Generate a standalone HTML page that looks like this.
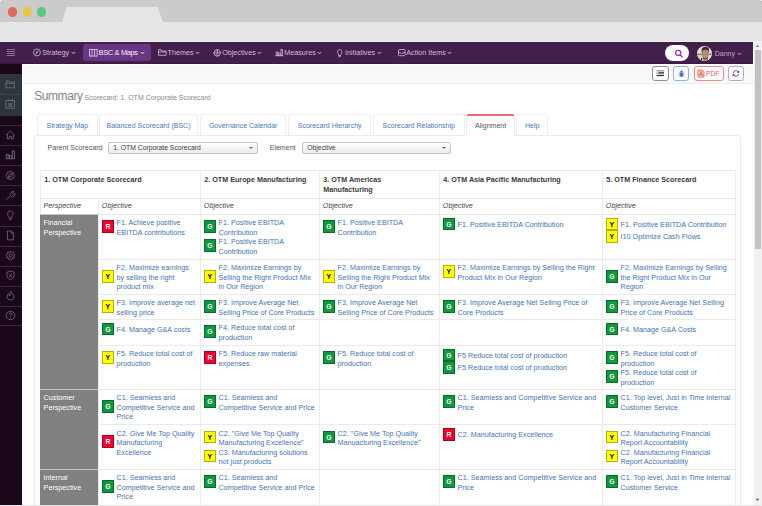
<!DOCTYPE html>
<html><head><meta charset="utf-8">
<style>
*{box-sizing:border-box;margin:0;padding:0}
html,body{width:762px;height:506px;overflow:hidden;background:#e9e9e9;font-family:"Liberation Sans",sans-serif}
.abs{position:absolute}
#topbar{left:0;top:0;width:762px;height:22px;background:#cbcbcb}
.dot{position:absolute;width:9.4px;height:9.4px;border-radius:50%;top:7.3px}
#addr{left:0;top:22px;width:762px;height:19px;background:#e5e5e5}
#nav{left:0;top:42px;width:754px;height:22px;background:#42204b;border-bottom:1px solid #3a1a42}
.ni{position:absolute;top:0;height:21px;line-height:21.6px;color:#cdbfdc;font-size:7.2px;white-space:nowrap}
.chev{display:inline-block;width:3px;height:3px;border-right:0.75px solid #cdbfdc;border-bottom:0.75px solid #cdbfdc;transform:scaleY(0.62) rotate(45deg);position:relative;top:-0.9px;margin-left:2.6px}
#scroll{left:753px;top:42px;width:9px;height:463px;background:#f1f1f1;border-left:1px solid #f9f9f9}
#thumb{left:755px;top:50px;width:6px;height:199px;background:#c1c1c1}
#side{left:0;top:64px;width:22px;height:441px;background:#1a0719}
.sep{position:absolute;left:0;width:22px;height:1px;background:#3a2a3c}
#toolbar{left:22px;top:64px;width:731px;height:20px;background:#f9f9fa;border-top:1px solid #fff;border-left:1px solid #fff;border-bottom:1px solid #eceef2}
#main{left:22px;top:84px;width:731.5px;height:421px;background:#fff}
.btn{position:absolute;top:66px;height:15px;border:1px solid #888;border-radius:3px;background:#fff}
#bottom{left:0;top:504.5px;width:762px;height:2px;background:#e6e6e6}

.tab{top:114.3px;height:20.7px;border:1px solid #eeeeee;border-bottom:none;border-radius:3px 3px 0 0;background:#fff;color:#4a79b3;font-size:7px;line-height:21px;text-align:center;white-space:nowrap}
.tab.act{border-top:2px solid #ef6a6f;color:#555;height:21.5px;line-height:20.5px}
.lbl{font-size:7.05px;color:#555;line-height:12px;white-space:nowrap}
.sel{top:141.5px;height:12px;border:1px solid #c2c2c2;border-radius:2px;background:linear-gradient(#fff,#ececec);font-size:6.8px;color:#3c3c3c;line-height:10.5px;padding-left:4px;white-space:nowrap}
.arr{position:absolute;right:4.2px;top:4.2px;width:0;height:0;border-left:2.2px solid transparent;border-right:2.2px solid transparent;border-top:2.4px solid #6a6a6a}
/*TBLCSS*/
.hl{height:1px;background:#ebebeb}
.vl{width:1px;background:#ebebeb}
.gc{background:#808080;border-top:1px solid #c4c4c4}
.pt{position:absolute;left:3.6px;top:3.2px;color:#fff;font-size:7.2px;line-height:9.45px;white-space:nowrap}
.hd{font-size:7.2px;font-weight:700;color:#3a3a3a;line-height:10px;white-space:nowrap}
.sh{font-size:7.2px;font-style:italic;color:#444;line-height:10px;white-space:nowrap}
.it{display:flex;align-items:center;white-space:nowrap}
.b{display:inline-block;flex:none;width:12.6px;height:12.6px;border:0.5px solid rgba(0,0,0,0.3);font-size:6.8px;font-weight:700;text-align:center;line-height:11.4px;position:relative;margin-right:2.400000000000002px}
.b.g{background:#0c9a3c;color:#fff}
.b.r{background:#f2002e;color:#fff}
.b.y{background:#ffff00;color:#000}
.tx{font-size:7.2px;line-height:9.45px;color:#4674b0;position:relative;top:0.5px}
/*END*/
</style></head><body>
<div id="topbar" class="abs"></div>
<div class="dot" style="left:7.6px;background:#e0685d"></div>
<div class="dot" style="left:22.5px;background:#e8c447"></div>
<div class="dot" style="left:37px;background:#58cb80"></div>
<svg class="abs" style="left:0;top:0" width="762" height="42"><path d="M62 22 L66.6 7 L157.6 7 L163 22 Z" fill="#e5e5e5"/></svg>
<div id="addr" class="abs"></div>
<div class="abs" style="left:0;top:40.8px;width:762px;height:1.2px;background:#f3f3f3"></div><div class="abs" style="left:0;top:0;width:1px;height:1px;background:#fff"></div><div class="abs" style="left:761px;top:0;width:1px;height:1px;background:#fff"></div>
<div id="nav" class="abs"></div>

<!-- nav items -->
<svg class="abs" style="left:7px;top:49px" width="9" height="8"><g stroke="#8d7c98" stroke-width="0.9"><line x1="0" y1="0.5" x2="8" y2="0.5"/><line x1="0" y1="2.5" x2="8" y2="2.5"/><line x1="0" y1="4.5" x2="8" y2="4.5"/><line x1="0" y1="6.5" x2="8" y2="6.5"/></g></svg>
<svg class="abs" style="left:32px;top:48px" width="10" height="9"><circle cx="4.9" cy="4.4" r="3.5" fill="none" stroke="#cdbfdc" stroke-width="0.8"/><path d="M6.9 2.4 L5.3 5 L2.9 6.4 L4.5 3.8 Z" fill="#cdbfdc"/></svg>
<div class="ni" style="left:42.3px;top:42px">Strategy<span class="chev"></span></div>
<div class="abs" style="left:83px;top:44.2px;width:68px;height:17.3px;background:#6a3583;border-radius:3px"></div>
<svg class="abs" style="left:88.5px;top:48.8px" width="9" height="8"><g fill="none" stroke="#e0d6ea" stroke-width="0.8"><rect x="0.5" y="0.5" width="7.6" height="6.6"/><line x1="3" y1="0.5" x2="3" y2="7.1"/><line x1="5.6" y1="0.5" x2="5.6" y2="7.1"/></g></svg>
<div class="ni" style="left:98.6px;top:42px;color:#f3eef7;font-size:7.5px;letter-spacing:-0.38px">BSC &amp; Maps<span class="chev" style="border-color:#f3eef7;margin-left:3px"></span></div>
<svg class="abs" style="left:157.8px;top:49px" width="9" height="7"><g fill="none" stroke="#cdbfdc" stroke-width="0.8"><path d="M0.5 1.5 L0.5 6.3 L8.1 6.3 L8.1 2 L3.5 2 L3 0.6 L0.5 0.6 Z"/><line x1="0.5" y1="3" x2="8.1" y2="3"/></g></svg>
<div class="ni" style="left:167.6px;top:42px">Themes<span class="chev"></span></div>
<svg class="abs" style="left:212.8px;top:48.6px" width="9" height="8"><g fill="none" stroke="#cdbfdc" stroke-width="0.8"><circle cx="4.2" cy="3.9" r="3.2"/><line x1="4.2" y1="0" x2="4.2" y2="7.8"/><line x1="0.3" y1="3.9" x2="8.1" y2="3.9"/></g></svg>
<div class="ni" style="left:222.2px;top:42px">Objectives<span class="chev"></span></div>
<svg class="abs" style="left:275px;top:49px" width="9" height="8"><g fill="none" stroke="#cdbfdc" stroke-width="0.75"><rect x="1.2" y="3" width="1.6" height="3.4"/><rect x="3.6" y="4" width="1.6" height="2.4"/><rect x="6" y="0.6" width="1.6" height="5.8"/></g><rect x="0.4" y="6.4" width="7.8" height="0.8" fill="#cdbfdc"/></svg>
<div class="ni" style="left:284.2px;top:42px">Measures<span class="chev"></span></div>
<svg class="abs" style="left:337.3px;top:48.5px" width="6" height="9"><g fill="none" stroke="#cdbfdc" stroke-width="0.8"><path d="M1.5 5.2 C0 4 0.2 0.5 2.7 0.5 C5.2 0.5 5.4 4 3.9 5.2 L3.9 6.5 L1.5 6.5 Z"/><line x1="1.6" y1="7.6" x2="3.8" y2="7.6"/></g></svg>
<div class="ni" style="left:345.1px;top:42px">Initiatives<span class="chev"></span></div>
<svg class="abs" style="left:397.5px;top:48.8px" width="8" height="8"><g fill="none" stroke="#cdbfdc" stroke-width="0.8"><rect x="0.5" y="0.5" width="6.6" height="6.2" rx="0.8"/><path d="M0.5 3.6 L2.5 3.6 L3.8 5 L5.1 3.6 L7.1 3.6"/></g></svg>
<div class="ni" style="left:406.3px;top:42px">Action Items<span class="chev"></span></div>
<div class="abs" style="left:665px;top:44.5px;width:23.5px;height:16.8px;background:#fff;border-radius:8.5px"></div>
<svg class="abs" style="left:674px;top:49px" width="10" height="9"><g fill="none" stroke="#8a3cb8" stroke-width="1.3"><circle cx="4.2" cy="3.9" r="2.6"/><line x1="6.1" y1="5.8" x2="8.4" y2="7.9" stroke-linecap="round"/></g></svg>
<svg class="abs" style="left:696px;top:45px" width="17" height="17"><defs><clipPath id="av"><circle cx="8.5" cy="8.5" r="7.5"/></clipPath></defs>
<g clip-path="url(#av)">
<rect x="0" y="0" width="17" height="17" fill="#e4e0da"/>
<rect x="0" y="8.6" width="17" height="1.6" fill="#a8705c"/>
<path d="M0 10 L7 11 L7 17 L0 17 Z" fill="#b8e2c4"/>
<path d="M12 10.5 L17 10 L17 17 L12 17 Z" fill="#c8e8d0"/>
<ellipse cx="9.4" cy="9" rx="3.3" ry="4.6" fill="#b88a78"/>
<path d="M5.6 6.5 C5.4 2.6 7.4 1.8 9.6 1.8 C12 1.8 13.4 3.2 13.2 6.4 L12.6 8.6 L12.3 5.4 C11 4.4 8 4.4 6.6 5.4 L6.3 8.4 Z" fill="#3b2a20"/>
<path d="M6.8 11.6 C7.6 13.8 11.2 13.8 12 11.6 L12 13.2 C11.2 15 7.6 15 6.8 13.2 Z" fill="#4a362c"/>
<rect x="7.4" y="13.6" width="4.6" height="4" fill="#9a7a6c"/>
<rect x="5" y="13.2" width="1.1" height="3" fill="#111"/>
</g></svg>
<div class="ni" style="left:714.7px;top:42.5px;color:#b9a9d2;font-size:7.05px">Danny<span class="chev" style="border-color:#b9a9d2;margin-left:3px"></span></div>
<div id="scroll" class="abs"></div>
<div id="thumb" class="abs"></div>
<svg class="abs" style="left:755px;top:44px" width="5" height="4"><path d="M0.8 3 L2.5 0.8 L4.2 3 Z" fill="#7a7a7a"/></svg>
<svg class="abs" style="left:755px;top:498px" width="5" height="4"><path d="M0.8 0.8 L2.5 3 L4.2 0.8 Z" fill="#505050"/></svg>
<div id="side" class="abs"></div>
<div id="toolbar" class="abs"></div>
<div id="main" class="abs"></div>

<!-- sidebar -->
<div class="abs" style="left:0;top:74px;width:22px;height:41.5px;background:#2f353b"></div>
<div class="sep" style="top:94px;background:#3f464d"></div>
<div class="sep" style="top:125px"></div>
<div class="sep" style="top:145px"></div>
<div class="sep" style="top:165px"></div>
<div class="sep" style="top:185px"></div>
<div class="sep" style="top:205px"></div>
<div class="sep" style="top:226px"></div>
<div class="sep" style="top:246px"></div>
<div class="sep" style="top:266px"></div>
<div class="sep" style="top:286px"></div>
<div class="sep" style="top:306px"></div>
<div class="sep" style="top:325px"></div>
<svg class="abs" style="left:5px;top:80px" width="11" height="9"><g fill="none" stroke="#6d7680" stroke-width="0.8"><path d="M1 1 L4 1 L4.8 2.2 L9.5 2.2 L9.5 7.8 L1 7.8 Z"/><line x1="1" y1="3.4" x2="9.5" y2="3.4"/></g></svg>
<svg class="abs" style="left:5px;top:99px" width="11" height="10"><g fill="none" stroke="#6d7680" stroke-width="0.8"><rect x="1" y="1.6" width="8.5" height="7.6"/><line x1="3.2" y1="0" x2="3.2" y2="2.4"/><line x1="7.3" y1="0" x2="7.3" y2="2.4"/><line x1="3.8" y1="4" x2="3.8" y2="8"/><line x1="5.3" y1="4" x2="5.3" y2="8"/><line x1="6.8" y1="4" x2="6.8" y2="8"/></g></svg>
<svg class="abs" style="left:5px;top:130px" width="11" height="10"><g fill="none" stroke="#6e5f82" stroke-width="0.9"><path d="M1.2 5 L5.3 1 L9.4 5"/><path d="M2.3 4 L2.3 8.8 L4.3 8.8 L4.3 6.3 L6.3 6.3 L6.3 8.8 L8.3 8.8 L8.3 4"/></g></svg>
<svg class="abs" style="left:5px;top:150px" width="11" height="10"><g fill="none" stroke="#6e5f82" stroke-width="0.9"><rect x="1.2" y="4.5" width="2" height="4.3"/><rect x="4.3" y="5.5" width="2" height="3.3"/><rect x="7.4" y="1" width="2" height="7.8"/></g></svg>
<svg class="abs" style="left:5px;top:170px" width="11" height="11"><g fill="none" stroke="#6e5f82" stroke-width="0.9"><circle cx="5.3" cy="5.5" r="4"/><path d="M7.4 3.4 L4.3 4.5 L3.2 7.6 L6.3 6.5 Z"/></g></svg>
<svg class="abs" style="left:5px;top:190px" width="11" height="11"><g fill="none" stroke="#6e5f82" stroke-width="0.9"><path d="M1.5 9.5 L5.5 5.5 M5.5 5.5 C4.5 3 6.5 1 9 1.8 L7.5 3.3 L8 4.3 L9 4.8 L10 3.5 C10.5 6 8.5 7.5 6 6.5"/></g></svg>
<svg class="abs" style="left:5px;top:210px" width="11" height="11"><g fill="none" stroke="#6e5f82" stroke-width="0.9"><path d="M4 7 C2 5.5 2 1 5.3 1 C8.6 1 8.6 5.5 6.6 7 L6.6 8.2 L4 8.2 Z"/><line x1="4.2" y1="9.6" x2="6.4" y2="9.6"/></g></svg>
<svg class="abs" style="left:5px;top:230px" width="11" height="11"><g fill="none" stroke="#6e5f82" stroke-width="0.9"><path d="M2.5 1 L6.3 1 L8.5 3.2 L8.5 9.8 L2.5 9.8 Z M6.3 1 L6.3 3.2 L8.5 3.2"/></g></svg>
<svg class="abs" style="left:5px;top:250px" width="11" height="11"><g fill="none" stroke="#6e5f82" stroke-width="0.9"><circle cx="5.5" cy="5.5" r="1.6"/><path d="M5.5 1 L6.5 2.3 L8.2 2 L8.3 3.6 L9.8 4.6 L8.9 6 L9.4 7.6 L7.8 8 L7 9.6 L5.5 8.8 L4 9.6 L3.2 8 L1.6 7.6 L2.1 6 L1.2 4.6 L2.7 3.6 L2.8 2 L4.5 2.3 Z"/></g></svg>
<svg class="abs" style="left:5px;top:270px" width="11" height="11"><g fill="none" stroke="#6e5f82" stroke-width="0.9"><path d="M5.5 1 L9.2 2.3 L9 6 C8.5 8.2 6.8 9.3 5.5 9.8 C4.2 9.3 2.5 8.2 2 6 L1.8 2.3 Z"/><path d="M4 4.2 L7 7.2 M7 4.2 L4 7.2"/></g></svg>
<svg class="abs" style="left:5px;top:290px" width="11" height="11"><g fill="none" stroke="#6e5f82" stroke-width="0.9"><path d="M5.5 1 C6.5 3 9 4.5 9 7 C9 8.8 7.5 9.8 5.5 9.8 C3.5 9.8 2 8.8 2 7 C2 5.5 3 4.5 3.5 3.8 C3.8 5 4.3 5.5 5 5.8 C5 4 5 2.5 5.5 1 Z"/></g></svg>
<svg class="abs" style="left:5px;top:310px" width="11" height="11"><g fill="none" stroke="#6e5f82" stroke-width="0.9"><circle cx="5.5" cy="5.5" r="4.3"/><path d="M4 4.2 C4 2.5 7 2.5 7 4.2 C7 5.3 5.5 5.3 5.5 6.5"/><line x1="5.5" y1="7.6" x2="5.5" y2="8.4"/></g></svg>
<!-- toolbar buttons -->
<div class="btn" style="left:652.2px;width:16.8px;border-color:#8f8f8f"></div>
<svg class="abs" style="left:656px;top:69px" width="9" height="8"><rect x="0.6" y="1" width="7.4" height="1.6" fill="#a9a9a9"/><rect x="2.4" y="3.4" width="5.6" height="1.5" fill="#6d6d6d"/><path d="M0.6 3.2 L1.9 4.1 L0.6 5 Z" fill="#2a3a5a"/><rect x="0.6" y="5.8" width="7.4" height="1.3" fill="#253450"/><rect x="2.4" y="3.4" width="5.6" height="0.6" fill="#253450"/></svg>
<div class="btn" style="left:673.2px;width:15.8px;border-color:#8db4dc"></div>
<svg class="abs" style="left:677px;top:69px" width="9" height="9"><g stroke="#6a98c8" stroke-width="0.5"><line x1="1.2" y1="2.8" x2="3" y2="4"/><line x1="7.8" y1="2.8" x2="6" y2="4"/><line x1="0.9" y1="5.3" x2="2.8" y2="5.3"/><line x1="8.1" y1="5.3" x2="6.2" y2="5.3"/><line x1="1.3" y1="7.8" x2="3" y2="6.8"/><line x1="7.7" y1="7.8" x2="6" y2="6.8"/></g><g fill="#3f78bc"><ellipse cx="4.5" cy="5.4" rx="1.9" ry="2.5"/><ellipse cx="4.5" cy="2.4" rx="1.2" ry="0.9"/></g></svg>
<div class="btn" style="left:694px;width:29.8px;border-color:#f08a8a"></div>
<svg class="abs" style="left:697px;top:69px" width="8" height="9"><path d="M1 1 L5 1 L7 3 L7 8 L1 8 Z" fill="#f6c9b8" stroke="#e86a5a" stroke-width="0.9"/><path d="M2.6 6.8 C3.3 5.3 3.9 4 4 2.6 C4.3 4 4.8 5.3 5.6 6.8" fill="none" stroke="#d84848" stroke-width="0.6"/><rect x="2.4" y="5.2" width="3.4" height="0.6" fill="#d84848"/></svg>
<div class="abs" style="left:706px;top:69px;font-size:6.5px;line-height:9px;color:#e2546a;letter-spacing:0.05px">PDF</div>
<div class="btn" style="left:728.2px;width:15.6px;border-color:#b9a6d6"></div>
<svg class="abs" style="left:732px;top:70px" width="8" height="7"><g fill="none" stroke="#6b4c9c" stroke-width="1"><path d="M1.3 3 A2.6 2.6 0 0 1 6 1.8"/><path d="M6.5 4 A2.6 2.6 0 0 1 1.8 5.2"/></g><g fill="#6b4c9c"><path d="M7.2 0.2 L7.2 3.1 L4.6 2.4 Z"/><path d="M0.6 6.8 L0.6 3.9 L3.2 4.6 Z"/></g></svg>
<!-- content -->
<div class="abs" style="left:34.2px;top:88.8px;font-size:12px;letter-spacing:-0.42px;color:#858585;line-height:14px;white-space:nowrap">Summary</div>
<div class="abs" style="left:84.6px;top:93px;font-size:7px;color:#8a8a8a;line-height:9px;white-space:nowrap">Scorecard: 1. OTM Corporate Scorecard</div>
<div class="abs" style="left:34px;top:135px;width:707px;height:375px;border:1px solid #ececec;border-radius:3px 3px 0 0"></div>
<div class="abs tab" style="left:37px;width:60.6px">Strategy Map</div>
<div class="abs tab" style="left:98.6px;width:99.8px">Balanced Scorecard (BSC)</div>
<div class="abs tab" style="left:200px;width:86.3px">Governance Calendar</div>
<div class="abs tab" style="left:288.4px;width:82.6px">Scorecard Hierarchy</div>
<div class="abs tab" style="left:372.6px;width:92.4px">Scorecard Relationship</div>
<div class="abs tab act" style="left:466.3px;width:48.6px">Alignment</div>
<div class="abs tab" style="left:516.2px;width:32px">Help</div>
<div class="abs lbl" style="left:47.6px;top:141.5px">Parent Scorecard</div>
<div class="abs sel" style="left:108.2px;width:149.6px">1. OTM Corporate Scorecard<span class="arr"></span></div>
<div class="abs lbl" style="left:269.7px;top:141.5px">Element</div>
<div class="abs sel" style="left:302.3px;width:149px">Objective<span class="arr"></span></div>
<!--TBL--><div class="abs hl" style="left:40px;top:170px;width:696px"></div>
<div class="abs hl" style="left:40px;top:198px;width:696px"></div>
<div class="abs hl" style="left:40px;top:214px;width:696px"></div>
<div class="abs hl" style="left:40px;top:214px;width:696px"></div>
<div class="abs hl" style="left:40px;top:259px;width:696px"></div>
<div class="abs hl" style="left:40px;top:294px;width:696px"></div>
<div class="abs hl" style="left:40px;top:319px;width:696px"></div>
<div class="abs hl" style="left:40px;top:345px;width:696px"></div>
<div class="abs hl" style="left:40px;top:389px;width:696px"></div>
<div class="abs hl" style="left:40px;top:424.3px;width:696px"></div>
<div class="abs hl" style="left:40px;top:469px;width:696px"></div>
<div class="abs hl" style="left:40px;top:504.5px;width:696px"></div>
<div class="abs vl" style="left:40px;top:170px;height:334.5px"></div>
<div class="abs vl" style="left:98px;top:198px;height:306.5px"></div>
<div class="abs vl" style="left:200px;top:170px;height:334.5px"></div>
<div class="abs vl" style="left:319px;top:170px;height:334.5px"></div>
<div class="abs vl" style="left:439px;top:170px;height:334.5px"></div>
<div class="abs vl" style="left:602px;top:170px;height:334.5px"></div>
<div class="abs vl" style="left:735px;top:170px;height:334.5px"></div>
<div class="abs gc" style="left:40px;top:214px;width:58px;height:175px"><div class="pt">Financial<br>Perspective</div></div>
<div class="abs gc" style="left:40px;top:389px;width:58px;height:80px"><div class="pt">Customer<br>Perspective</div></div>
<div class="abs gc" style="left:40px;top:469px;width:58px;height:35.5px"><div class="pt">Internal<br>Perspective</div></div>
<div class="abs hd" style="left:44.2px;top:175px">1. OTM Corporate Scorecard</div>
<div class="abs hd" style="left:204.2px;top:175px">2. OTM Europe Manufacturing</div>
<div class="abs hd" style="left:323.2px;top:175px">3. OTM Americas<br>Manufacturing</div>
<div class="abs hd" style="left:443.2px;top:175px">4. OTM Asia Pacific Manufacturing</div>
<div class="abs hd" style="left:606.2px;top:175px">5. OTM Finance Scorecard</div>
<div class="abs sh" style="left:43.5px;top:201.4px">Perspective</div>
<div class="abs sh" style="left:101.8px;top:201.4px">Objective</div>
<div class="abs sh" style="left:203.8px;top:201.4px">Objective</div>
<div class="abs sh" style="left:322.8px;top:201.4px">Objective</div>
<div class="abs sh" style="left:442.8px;top:201.4px">Objective</div>
<div class="abs sh" style="left:605.8px;top:201.4px">Objective</div>
<div class="abs it" style="left:101.6px;top:217.80px;height:18.90px"><span class="b r" style="top:-0.6px">R</span><span class="tx">F1. Achieve positive<br>EBITDA contributions</span></div>
<div class="abs it" style="left:203.6px;top:217.80px;height:18.90px"><span class="b g" style="top:-0.6px">G</span><span class="tx">F1. Positive EBITDA<br>Contribution</span></div>
<div class="abs it" style="left:203.6px;top:236.70px;height:18.90px"><span class="b g" style="top:-0.6px">G</span><span class="tx">F1. Positive EBITDA<br>Contribution</span></div>
<div class="abs it" style="left:322.6px;top:217.80px;height:18.90px"><span class="b g" style="top:-0.6px">G</span><span class="tx">F1. Positive EBITDA<br>Contribution</span></div>
<div class="abs it" style="left:442.6px;top:217.80px;height:12.60px"><span class="b g">G</span><span class="tx">F1. Positive EBITDA Contribution</span></div>
<div class="abs it" style="left:605.6px;top:217.80px;height:12.60px"><span class="b y">Y</span><span class="tx">F1. Positive EBITDA Contribution</span></div>
<div class="abs it" style="left:605.6px;top:230.40px;height:12.60px"><span class="b y">Y</span><span class="tx">I10 Optimize Cash Flows</span></div>
<div class="abs it" style="left:101.6px;top:262.80px;height:28.35px"><span class="b y" style="top:-0.6px">Y</span><span class="tx">F2. Maximize earnings<br>by selling the right<br>product mix</span></div>
<div class="abs it" style="left:203.6px;top:262.80px;height:28.35px"><span class="b y" style="top:-0.6px">Y</span><span class="tx">F2. Maximize Earnings by<br>Selling the Right Product Mix<br>in Our Region</span></div>
<div class="abs it" style="left:322.6px;top:262.80px;height:28.35px"><span class="b y" style="top:-0.6px">Y</span><span class="tx">F2. Maximize Earnings by<br>Selling the Right Product Mix<br>in Our Region</span></div>
<div class="abs it" style="left:442.6px;top:262.80px;height:18.90px"><span class="b y" style="top:-0.6px">Y</span><span class="tx">F2. Maximize Earnings by Selling the Right<br>Product Mix in Our Region</span></div>
<div class="abs it" style="left:605.6px;top:262.80px;height:28.35px"><span class="b g" style="top:-0.6px">G</span><span class="tx">F2. Maximize Earnings by Selling<br>the Right Product Mix in Our<br>Region</span></div>
<div class="abs it" style="left:101.6px;top:297.80px;height:18.90px"><span class="b y" style="top:-0.6px">Y</span><span class="tx">F3. Improve average net<br>selling price</span></div>
<div class="abs it" style="left:203.6px;top:297.80px;height:18.90px"><span class="b g" style="top:-0.6px">G</span><span class="tx">F3. Improve Average Net<br>Selling Price of Core Products</span></div>
<div class="abs it" style="left:322.6px;top:297.80px;height:18.90px"><span class="b g" style="top:-0.6px">G</span><span class="tx">F3. Improve Average Net<br>Selling Price of Core Products</span></div>
<div class="abs it" style="left:442.6px;top:297.80px;height:18.90px"><span class="b g" style="top:-0.6px">G</span><span class="tx">F3. Improve Average Net Selling Price of<br>Core Products</span></div>
<div class="abs it" style="left:605.6px;top:297.80px;height:18.90px"><span class="b g" style="top:-0.6px">G</span><span class="tx">F3. Improve Average Net Selling<br>Price of Core Products</span></div>
<div class="abs it" style="left:101.6px;top:322.80px;height:12.60px"><span class="b g">G</span><span class="tx">F4. Manage G&amp;A costs</span></div>
<div class="abs it" style="left:203.6px;top:322.80px;height:18.90px"><span class="b g" style="top:-0.6px">G</span><span class="tx">F4. Reduce total cost of<br>production</span></div>
<div class="abs it" style="left:605.6px;top:322.80px;height:12.60px"><span class="b g">G</span><span class="tx">F4. Manage G&amp;A Costs</span></div>
<div class="abs it" style="left:101.6px;top:348.80px;height:18.90px"><span class="b y" style="top:-0.6px">Y</span><span class="tx">F5. Reduce total cost of<br>production</span></div>
<div class="abs it" style="left:203.6px;top:348.80px;height:18.90px"><span class="b r" style="top:-0.6px">R</span><span class="tx">F5. Reduce raw material<br>expenses</span></div>
<div class="abs it" style="left:322.6px;top:348.80px;height:18.90px"><span class="b g" style="top:-0.6px">G</span><span class="tx">F5. Reduce total cost of<br>production</span></div>
<div class="abs it" style="left:442.6px;top:348.80px;height:12.60px"><span class="b g">G</span><span class="tx">F5 Reduce total cost of production</span></div>
<div class="abs it" style="left:442.6px;top:361.40px;height:12.60px"><span class="b g">G</span><span class="tx">F5 Reduce total cost of production</span></div>
<div class="abs it" style="left:605.6px;top:348.80px;height:18.90px"><span class="b g" style="top:-0.6px">G</span><span class="tx">F5. Reduce total cost of<br>production</span></div>
<div class="abs it" style="left:605.6px;top:367.70px;height:18.90px"><span class="b g" style="top:-0.6px">G</span><span class="tx">F5. Reduce total cost of<br>production</span></div>
<div class="abs it" style="left:101.6px;top:392.80px;height:28.35px"><span class="b g" style="top:-0.6px">G</span><span class="tx">C1. Seamless and<br>Competitive Service and<br>Price</span></div>
<div class="abs it" style="left:203.6px;top:392.80px;height:18.90px"><span class="b g" style="top:-0.6px">G</span><span class="tx">C1. Seamless and<br>Competitive Service and Price</span></div>
<div class="abs it" style="left:442.6px;top:392.80px;height:18.90px"><span class="b g" style="top:-0.6px">G</span><span class="tx">C1. Seamless and Competitive Service and<br>Price</span></div>
<div class="abs it" style="left:605.6px;top:392.80px;height:18.90px"><span class="b g" style="top:-0.6px">G</span><span class="tx">C1. Top level, Just in Time Internal<br>Customer Service</span></div>
<div class="abs it" style="left:101.6px;top:428.10px;height:28.35px"><span class="b r" style="top:-0.6px">R</span><span class="tx">C2. Give Me Top Quality<br>Manufacturing<br>Excellence</span></div>
<div class="abs it" style="left:203.6px;top:428.10px;height:18.90px"><span class="b y" style="top:-0.6px">Y</span><span class="tx">C2. &quot;Give Me Top Quality<br>Manufacturing Excellence&quot;</span></div>
<div class="abs it" style="left:203.6px;top:447.00px;height:18.90px"><span class="b y" style="top:-0.6px">Y</span><span class="tx">C3. Manufacturing solutions<br>not just products</span></div>
<div class="abs it" style="left:322.6px;top:428.10px;height:18.90px"><span class="b g" style="top:-0.6px">G</span><span class="tx">C2. &quot;Give Me Top Quality<br>Manuacturing Excellence&quot;</span></div>
<div class="abs it" style="left:442.6px;top:428.10px;height:12.60px"><span class="b r">R</span><span class="tx">C2. Manufacturing Excellence</span></div>
<div class="abs it" style="left:605.6px;top:428.10px;height:18.90px"><span class="b y" style="top:-0.6px">Y</span><span class="tx">C2. Manufacturing Financial<br>Report Accountability</span></div>
<div class="abs it" style="left:605.6px;top:447.00px;height:18.90px"><span class="b y" style="top:-0.6px">Y</span><span class="tx">C2. Manufacturing Financial<br>Report Accountability</span></div>
<div class="abs it" style="left:101.6px;top:472.80px;height:28.35px"><span class="b g" style="top:-0.6px">G</span><span class="tx">C1. Seamless and<br>Competitive Service and<br>Price</span></div>
<div class="abs it" style="left:203.6px;top:472.80px;height:18.90px"><span class="b g" style="top:-0.6px">G</span><span class="tx">C1. Seamless and<br>Competitive Service and Price</span></div>
<div class="abs it" style="left:442.6px;top:472.80px;height:18.90px"><span class="b g" style="top:-0.6px">G</span><span class="tx">C1. Seamless and Competitive Service and<br>Price</span></div>
<div class="abs it" style="left:605.6px;top:472.80px;height:18.90px"><span class="b g" style="top:-0.6px">G</span><span class="tx">C1. Top level, Just in Time Internal<br>Customer Service</span></div><!--ENDTBL-->
<div id="bottom" class="abs"></div>
</body></html>
